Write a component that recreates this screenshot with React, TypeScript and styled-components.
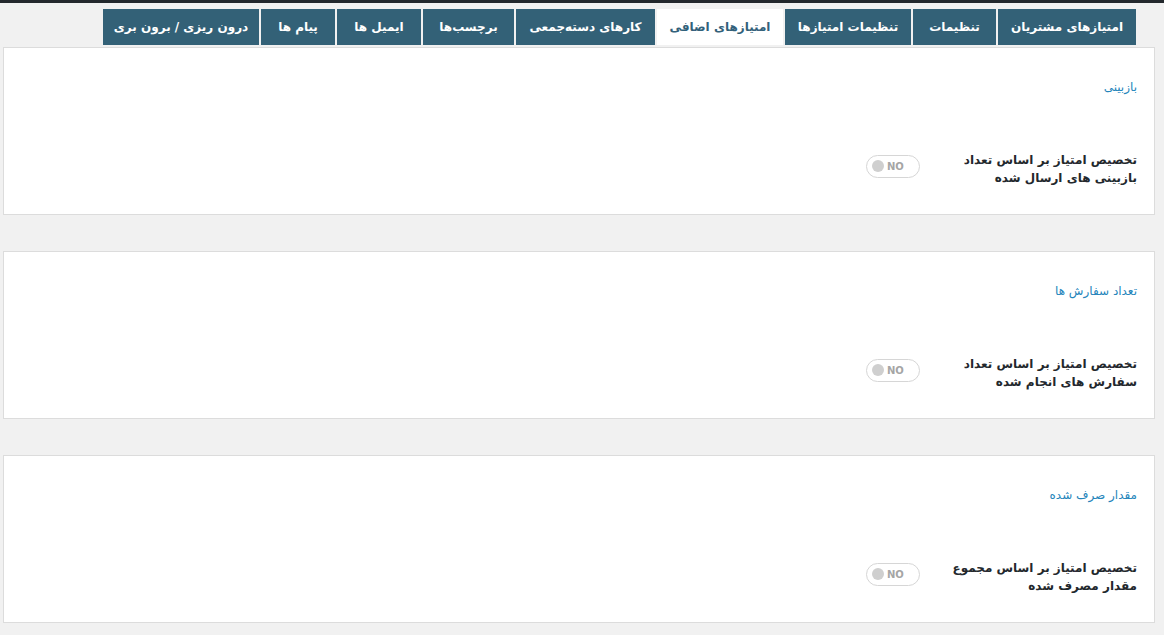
import React from "react";
import styled, { createGlobalStyle } from "styled-components";

const Global = createGlobalStyle`
  html, body { margin: 0; padding: 0; background: #f1f1f1; }
  body { font-family: Tahoma, "DejaVu Sans", sans-serif; }
`;

const TopBar = styled.div`
  height: 3px;
  background: #23282d;
`;

const Page = styled.div`
  direction: rtl;
  padding: 6px 9px 0 3px;
`;

const Tabs = styled.nav`
  display: flex;
  gap: 2px;
  padding-right: 19px;
  height: 36px;
`;

const Tab = styled.div<{ $active?: boolean; $w: number }>`
  box-sizing: border-box;
  width: ${(p) => p.$w}px;
  height: 36px;
  display: flex;
  align-items: center;
  justify-content: center;
  white-space: nowrap;
  font-size: 12px;
  font-weight: bold;
  background: ${(p) => (p.$active ? "#ffffff" : "#336177")};
  color: ${(p) => (p.$active ? "#32617a" : "#ffffff")};
`;

const Panel = styled.section<{ $first?: boolean }>`
  background: #fff;
  border: 1px solid #dcdcdc;
  margin-top: ${(p) => (p.$first ? "2px" : "36px")};
  padding: 31px 16px 26px;
  height: 168px;
  box-sizing: border-box;
`;

const Title = styled.div`
  font-size: 12px;
  line-height: 16px;
  color: #2585bb;
  margin-right: 1px;
`;

const Row = styled.div`
  display: grid;
  grid-template-columns: 218px auto;
  justify-content: start;
  align-items: center;
  margin-top: 56px;
`;

const Label = styled.div`
  font-size: 12px;
  font-weight: bold;
  line-height: 18px;
  color: #23282d;
  margin-right: 1px;
`;

const Toggle = styled.div`
  box-sizing: border-box;
  width: 54px;
  height: 23px;
  border: 1px solid #d6d6d6;
  border-radius: 12px;
  background: #fff;
  direction: ltr;
  display: flex;
  align-items: center;
  padding-left: 5px;
  gap: 3px;
  margin-top: -6px;
`;

const Knob = styled.span`
  width: 12px;
  height: 12px;
  border-radius: 50%;
  background: #cfcfcf;
`;

const ToggleText = styled.span`
  font-family: "DejaVu Sans", sans-serif;
  font-size: 10px;
  font-weight: bold;
  color: #a5a5a5;
`;

const tabs: { label: string; w: number; active?: boolean }[] = [
  { label: "امتیازهای مشتریان", w: 138 },
  { label: "تنظیمات", w: 83 },
  { label: "تنظیمات امتیازها", w: 126 },
  { label: "امتیازهای اضافی", w: 126, active: true },
  { label: "کارهای دسته‌جمعی", w: 139 },
  { label: "برچسب‌ها", w: 91 },
  { label: "ایمیل ها", w: 84 },
  { label: "پیام ها", w: 74 },
  { label: "درون ریزی / برون بری", w: 156 },
];

const sections = [
  { title: "بازبینی", l1: "تخصیص امتیاز بر اساس تعداد", l2: "بازبینی های ارسال شده" },
  { title: "تعداد سفارش ها", l1: "تخصیص امتیاز بر اساس تعداد", l2: "سفارش های انجام شده" },
  { title: "مقدار صرف شده", l1: "تخصیص امتیاز بر اساس مجموع", l2: "مقدار مصرف شده" },
];

export default function App() {
  return (
    <>
      <Global />
      <TopBar />
      <Page>
        <Tabs>
          {tabs.map((t) => (
            <Tab key={t.label} $w={t.w} $active={t.active}>
              {t.label}
            </Tab>
          ))}
        </Tabs>
        {sections.map((s, i) => (
          <Panel key={s.title} $first={i === 0}>
            <Title>{s.title}</Title>
            <Row>
              <Label>
                {s.l1}
                <br />
                {s.l2}
              </Label>
              <Toggle>
                <Knob />
                <ToggleText>NO</ToggleText>
              </Toggle>
            </Row>
          </Panel>
        ))}
      </Page>
    </>
  );
}
